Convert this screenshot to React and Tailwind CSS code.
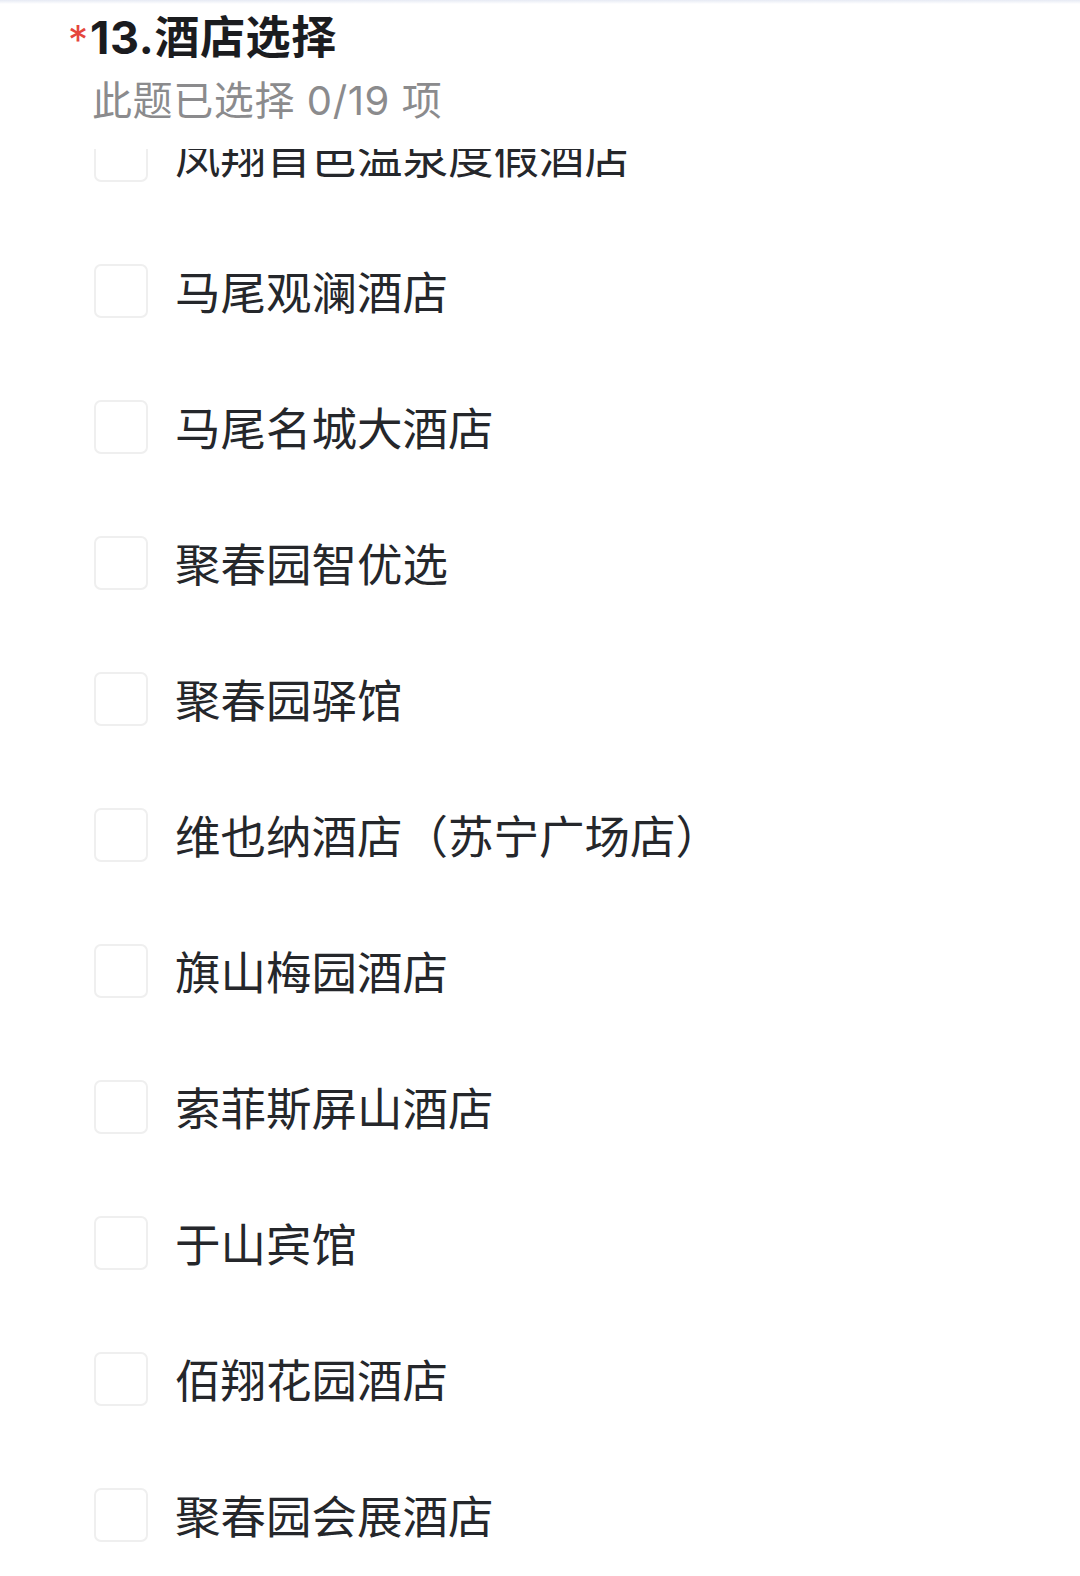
import React from 'react';

const hotels = [
  '凤翔首邑温泉度假酒店',
  '马尾观澜酒店',
  '马尾名城大酒店',
  '聚春园智优选',
  '聚春园驿馆',
  '维也纳酒店（苏宁广场店）',
  '旗山梅园酒店',
  '索菲斯屏山酒店',
  '于山宾馆',
  '佰翔花园酒店',
  '聚春园会展酒店',
];

const font = { fontFamily: '"Noto Sans CJK SC", "Noto Sans", sans-serif' };
const mixed = { fontFamily: 'Inter, "Noto Sans CJK SC", sans-serif' };

export default function App() {
  return (
    <div className="w-[1080px] h-[1576px] bg-white overflow-hidden" style={font}>
      {/* Question header */}
      <div className="relative z-10 h-[149px] bg-white">
        <div className="h-[4px] bg-gradient-to-b from-[#e6eaf4] to-white" />
        <div className="flex items-start h-[52px] mt-[8px] pl-[68px]">
          <span className="text-[40px] text-[#e5463c] mt-[8px] mr-[2px] leading-none" style={mixed}>*</span>
          <span className="text-[45px] font-bold text-[#1b1c1f] leading-[52px] tracking-[0.6px]" style={mixed}>13.酒店选择</span>
        </div>
        <div className="pl-[92px] mt-[13px] text-[40px] leading-[48px] text-[#8b8b8d] tracking-[0.6px]" style={mixed}>
          此题已选择 0/19 项
        </div>
      </div>

      {/* Option list */}
      <div className="overflow-hidden">
        <div className="-mt-[62px] flex flex-col">
          {hotels.map((name) => (
            <label key={name} className="flex items-center h-[136px] pl-[94px]">
              <span className="w-[54px] h-[54px] rounded-[7px] border-2 border-[#efefef] bg-white shrink-0" />
              <span className="ml-[27px] text-[45.5px] leading-none text-[#25272b]">{name}</span>
            </label>
          ))}
        </div>
      </div>
    </div>
  );
}
